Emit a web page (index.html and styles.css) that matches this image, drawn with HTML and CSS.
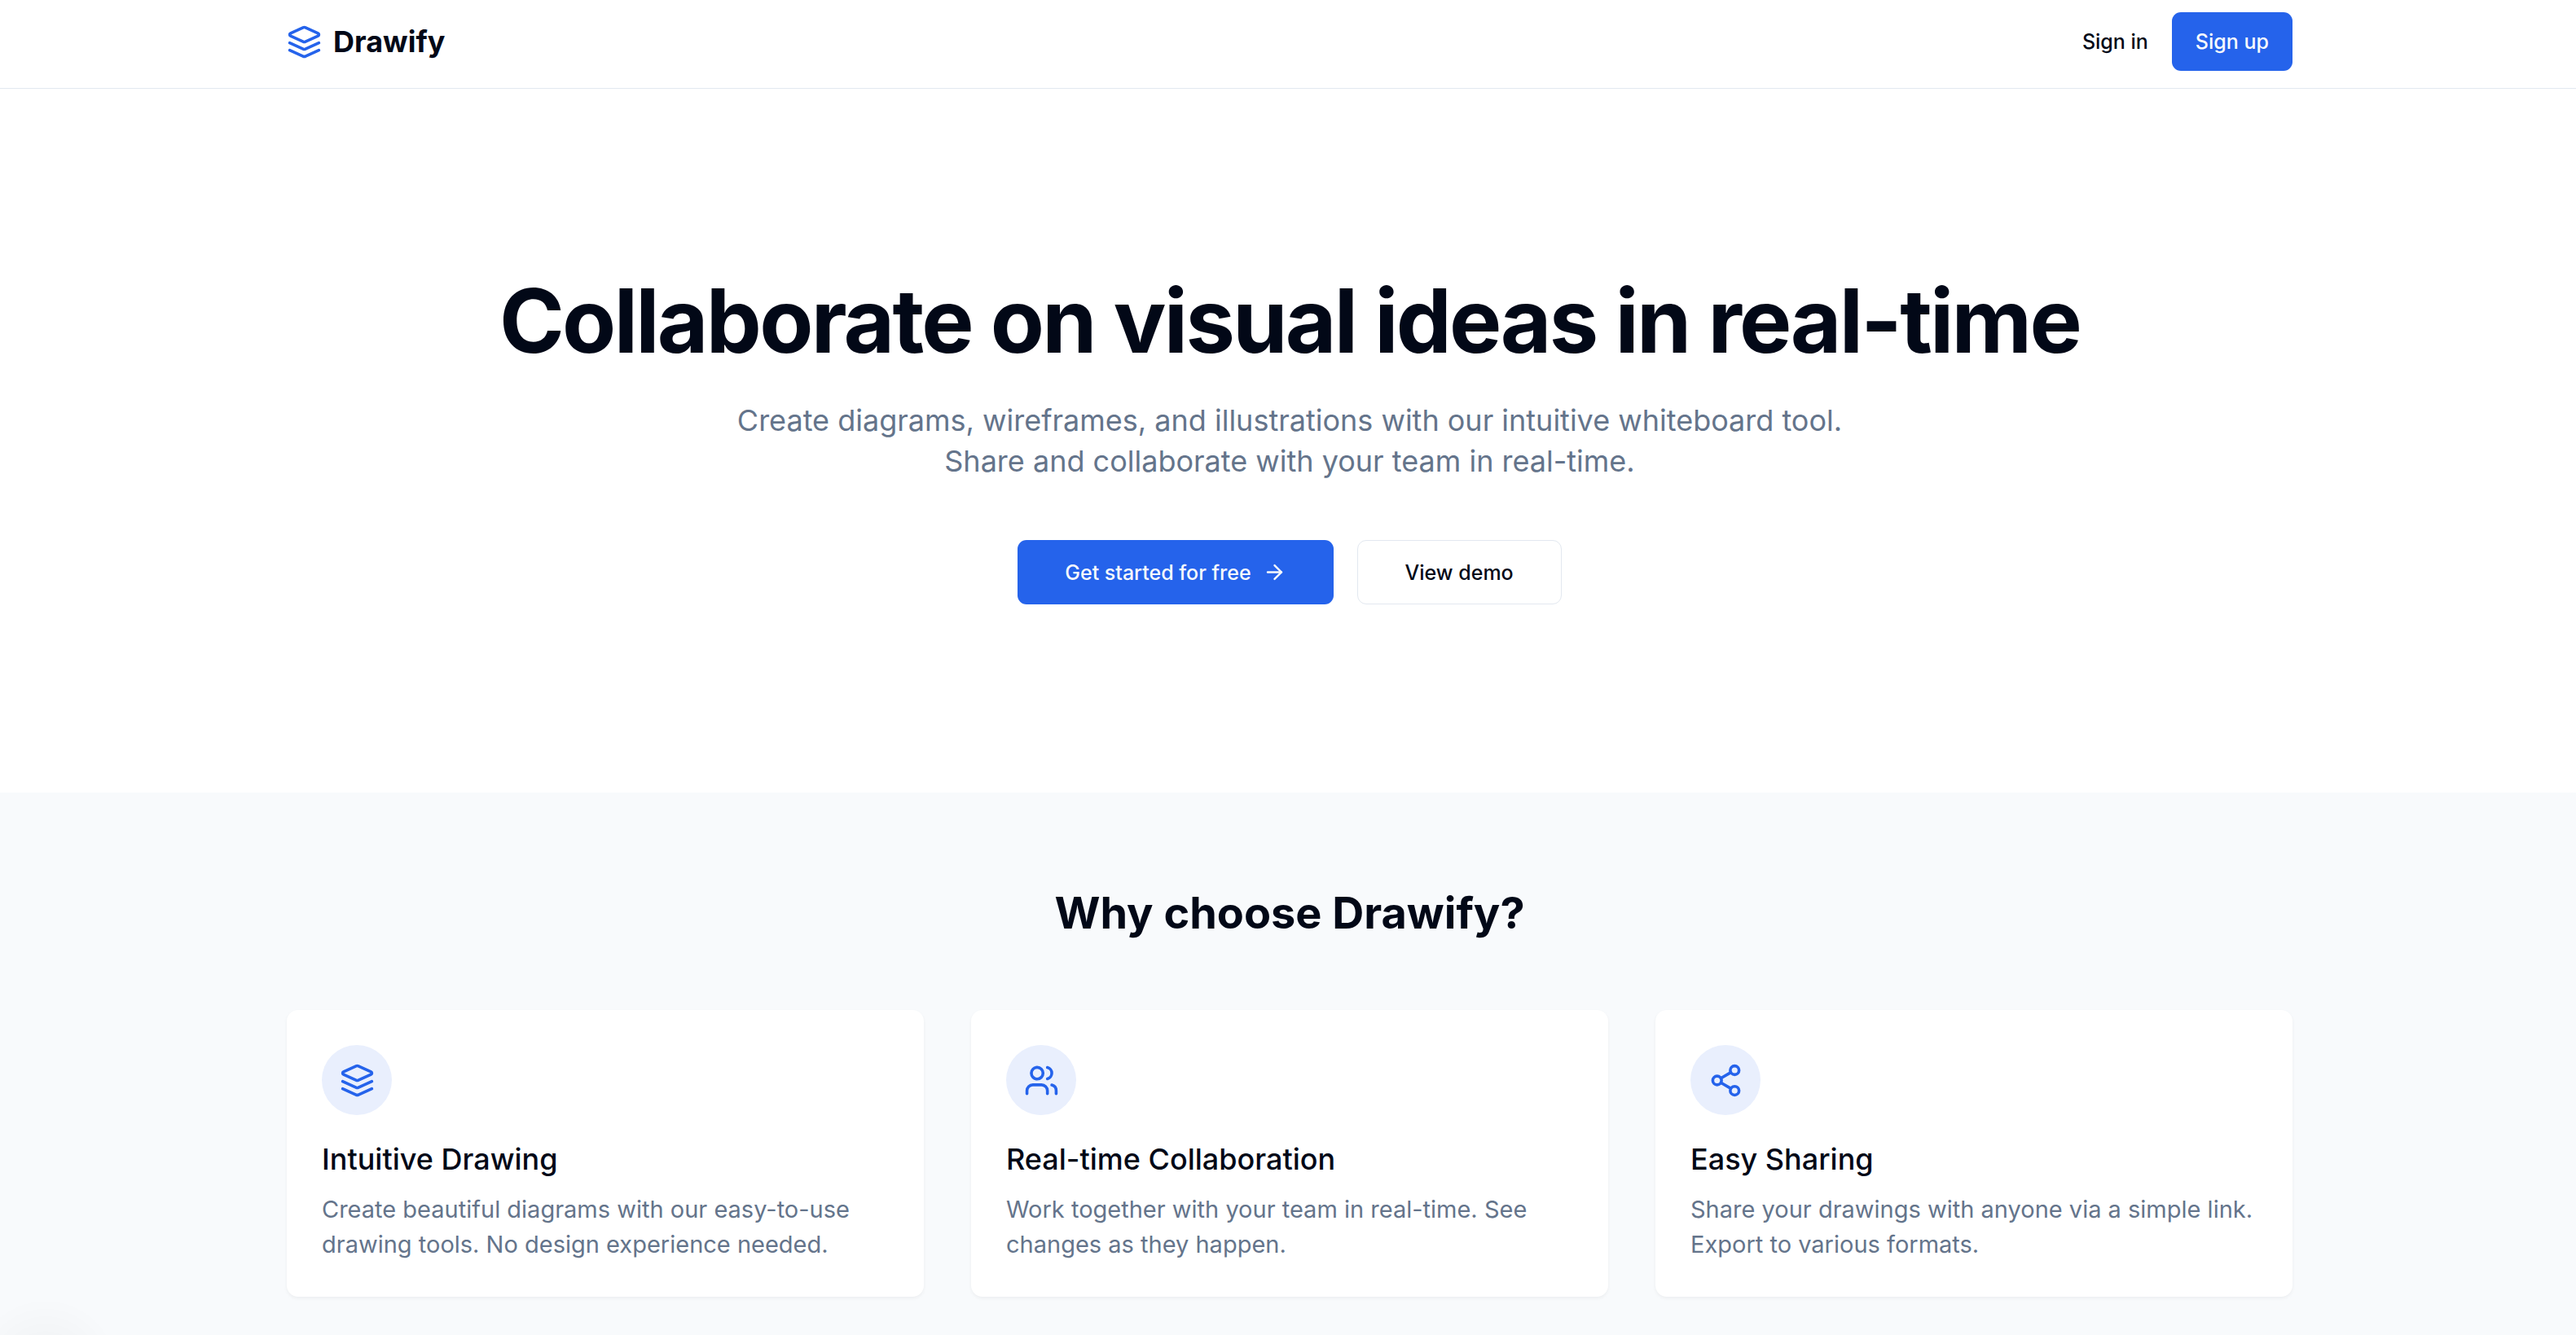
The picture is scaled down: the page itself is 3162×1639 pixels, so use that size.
FILE: index.html
```html
<!DOCTYPE html>
<html lang="en">
<head>
  <meta charset="utf-8">
  <meta name="viewport" content="width=device-width, initial-scale=1">
  <title>Drawify</title>
  <link rel="stylesheet" href="styles.css">
</head>
<body>
  <header class="site-header">
    <div class="container header-row">
      <a class="brand" href="#">
        <svg class="icon brand-icon" viewBox="0 0 24 24" aria-hidden="true">
          <path d="m12.83 2.18a2 2 0 0 0-1.66 0L2.6 6.08a1 1 0 0 0 0 1.83l8.58 3.91a2 2 0 0 0 1.66 0l8.58-3.9a1 1 0 0 0 0-1.83Z"/>
          <path d="m22 17.65-9.17 4.16a2 2 0 0 1-1.66 0L2 17.65"/>
          <path d="m22 12.65-9.17 4.16a2 2 0 0 1-1.66 0L2 12.65"/>
        </svg>
        <span>Drawify</span>
      </a>
      <nav class="header-nav">
        <a class="nav-link" href="#">Sign in</a>
        <button class="button button-primary" type="button">Sign up</button>
      </nav>
    </div>
  </header>

  <main>
    <section class="hero">
      <div class="container hero-content">
        <h1 class="hero-title">Collaborate on visual ideas in real-time</h1>
        <p class="hero-lead">Create diagrams, wireframes, and illustrations with our intuitive whiteboard tool. Share and collaborate with your team in real-time.</p>
        <div class="hero-actions">
          <button class="button button-primary button-large" type="button">
            <span>Get started for free</span>
            <svg class="icon arrow-icon" viewBox="0 0 24 24" aria-hidden="true">
              <path d="M5 12h14"/>
              <path d="m12 5 7 7-7 7"/>
            </svg>
          </button>
          <button class="button button-outline button-large" type="button">View demo</button>
        </div>
      </div>
    </section>

    <section class="features">
      <div class="container">
        <h2 class="features-title">Why choose Drawify?</h2>
        <div class="feature-grid">
          <article class="card">
            <div class="card-badge">
              <svg class="icon" viewBox="0 0 24 24" aria-hidden="true">
                <path d="m12.83 2.18a2 2 0 0 0-1.66 0L2.6 6.08a1 1 0 0 0 0 1.83l8.58 3.91a2 2 0 0 0 1.66 0l8.58-3.9a1 1 0 0 0 0-1.83Z"/>
                <path d="m22 17.65-9.17 4.16a2 2 0 0 1-1.66 0L2 17.65"/>
                <path d="m22 12.65-9.17 4.16a2 2 0 0 1-1.66 0L2 12.65"/>
              </svg>
            </div>
            <h3 class="card-title">Intuitive Drawing</h3>
            <p class="card-text">Create beautiful diagrams with our easy-to-use drawing tools. No design experience needed.</p>
          </article>
          <article class="card">
            <div class="card-badge">
              <svg class="icon" viewBox="0 0 24 24" aria-hidden="true">
                <path d="M16 21v-2a4 4 0 0 0-4-4H6a4 4 0 0 0-4 4v2"/>
                <circle cx="9" cy="7" r="4"/>
                <path d="M22 21v-2a4 4 0 0 0-3-3.87"/>
                <path d="M16 3.13a4 4 0 0 1 0 7.75"/>
              </svg>
            </div>
            <h3 class="card-title">Real-time Collaboration</h3>
            <p class="card-text">Work together with your team in real-time. See changes as they happen.</p>
          </article>
          <article class="card">
            <div class="card-badge">
              <svg class="icon" viewBox="0 0 24 24" aria-hidden="true">
                <circle cx="18" cy="5" r="3"/>
                <circle cx="6" cy="12" r="3"/>
                <circle cx="18" cy="19" r="3"/>
                <path d="m8.59 13.51 6.83 3.98"/>
                <path d="m15.41 6.51-6.82 3.98"/>
              </svg>
            </div>
            <h3 class="card-title">Easy Sharing</h3>
            <p class="card-text">Share your drawings with anyone via a simple link. Export to various formats.</p>
          </article>
        </div>
      </div>
    </section>
  </main>
</body>
</html>
```
FILE: styles.css
```css
:root {
  --ink: #020817;
  --muted: #64748b;
  --primary: #2563eb;
  --border: #e2e8f0;
}

*,
*::before,
*::after {
  box-sizing: border-box;
}

body {
  margin: 0;
  background: #fff;
  color: var(--ink);
  font-family: Inter, "Liberation Sans", sans-serif;
}

h1,
h2,
h3,
p {
  margin: 0;
}

a {
  color: inherit;
  text-decoration: none;
}

.container {
  max-width: 2520px;
  margin: 0 auto;
  padding: 0 27px 0 31px;
}

.icon {
  display: block;
  width: 43px;
  height: 43px;
  flex: none;
  fill: none;
  stroke: currentColor;
  stroke-width: 2;
  stroke-linecap: round;
  stroke-linejoin: round;
}

/* Header */
.site-header {
  padding: 15px 0 21px;
  border-bottom: 1px solid var(--border);
}

.header-row {
  display: flex;
  align-items: center;
  justify-content: space-between;
}

.brand {
  display: flex;
  align-items: center;
  gap: 14px;
  font-size: 36px;
  line-height: 50px;
  font-weight: 700;
}

.brand-icon {
  color: var(--primary);
}

.header-nav {
  display: flex;
  align-items: center;
  gap: 29px;
}

.nav-link {
  font-size: 25px;
  line-height: 36px;
  font-weight: 500;
}

/* Buttons */
.button {
  display: inline-flex;
  align-items: center;
  justify-content: center;
  gap: 14px;
  height: 72px;
  padding: 0 29px;
  border: 0;
  border-radius: 11px;
  font-family: inherit;
  font-size: 25px;
  line-height: 36px;
  font-weight: 500;
  white-space: nowrap;
  cursor: pointer;
}

.button-primary {
  background: var(--primary);
  color: #f8fafc;
}

.button-outline {
  background: #fff;
  border: 1px solid var(--border);
  color: var(--ink);
}

.button-large {
  height: 79px;
  padding: 0 58px;
}

.arrow-icon {
  width: 29px;
  height: 29px;
}

/* Hero */
.hero {
  padding: 231px 0;
}

.hero-content {
  display: flex;
  flex-direction: column;
  align-items: center;
  text-align: center;
}

.hero-title {
  font-size: 108px;
  line-height: 108px;
  font-weight: 700;
  letter-spacing: -0.025em;
}

.hero-lead {
  max-width: 1382px;
  margin-top: 43px;
  color: var(--muted);
  font-size: 36px;
  line-height: 50px;
}

.hero-actions {
  display: flex;
  flex-wrap: wrap;
  justify-content: center;
  gap: 29px;
  margin-top: 72px;
}

/* Features */
.features {
  padding: 115px 0 47px;
  background: #f8fafc;
}

.features-title {
  margin-bottom: 87px;
  font-size: 54px;
  line-height: 65px;
  font-weight: 700;
  text-align: center;
}

.feature-grid {
  display: grid;
  grid-template-columns: repeat(auto-fit, minmax(min(100%, 600px), 1fr));
  gap: 58px;
}

.card {
  padding: 43px;
  border-radius: 14px;
  background: #fff;
  box-shadow: 0 2px 4px rgba(0, 0, 0, 0.05);
}

.card-badge {
  display: grid;
  place-items: center;
  width: 86px;
  height: 86px;
  margin-bottom: 29px;
  border-radius: 50%;
  background: #e9effd;
  color: var(--primary);
}

.card-title {
  margin-bottom: 15px;
  font-size: 36px;
  line-height: 50px;
  font-weight: 500;
}

.card-text {
  color: var(--muted);
  font-size: 29px;
  line-height: 43px;
}

/* Soft shadow rising from the bottom left corner of the window */
body::after {
  content: "";
  position: fixed;
  left: 0;
  bottom: 0;
  width: 160px;
  height: 50px;
  background: radial-gradient(circle 92px at 56px 96px, rgba(0, 0, 0, 0.06), rgba(0, 0, 0, 0.02) 50%, rgba(0, 0, 0, 0));
  pointer-events: none;
}
```
